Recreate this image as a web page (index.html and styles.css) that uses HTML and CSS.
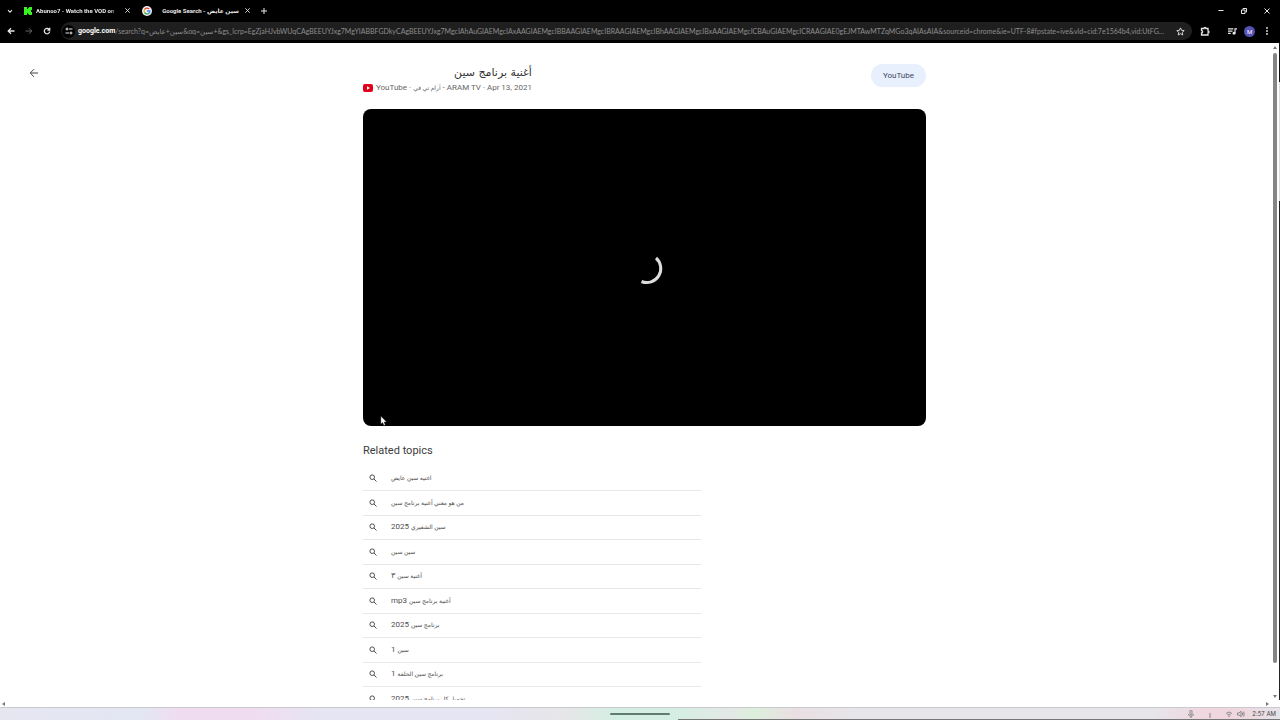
FILE: index.html
```html
<!DOCTYPE html>
<html lang="en">
<head>
<meta charset="utf-8">
<meta name="viewport" content="width=device-width, initial-scale=1">
<title>Google Search - سين عايض</title>
<link rel="stylesheet" href="styles.css">
</head>
<body>
<div class="browser">
  <header class="chrome">
    <div class="tab-strip">
      <button class="icon-btn tab-search" aria-label="Search tabs"><svg viewBox="0 0 10 10" width="8" height="8"><path d="M2.5 4 5 6.5 7.500 4" class="stroke bold"/></svg></button>
      <div class="tab">
        <svg class="favicon" viewBox="0 0 8 8" width="8" height="8"><path fill="#36f51e" d="M0 0h3v2h1V1h1V0h3v3H7v1H6v0h1v1h1v3H5V7H4V6H3v2H0z"/></svg>
        <a class="tab-title fade" href="#">Abunoo7 - Watch the VOD on</a>
        <button class="icon-btn" aria-label="Close tab"><svg viewBox="0 0 8 8" width="7" height="7"><path d="m1.500 1.500 5 5m0-5-5 5" class="stroke"/></svg></button>
      </div>
      <div class="tab tab-active">
        <svg class="favicon" viewBox="0 0 12 12" width="10" height="10"><circle cx="6" cy="6" r="6" fill="#eee"/><g fill="none" stroke-width="1.600"><path stroke="#ea4335" d="M3 4.300A3.500 3.500 0 0 1 8.500 3.500"/><path stroke="#fbbc05" d="M3 4.300a3.500 3.500 0 0 0 0 3.400"/><path stroke="#34a853" d="M3 7.700a3.500 3.500 0 0 0 5.300 1"/><path stroke="#4285f4" d="M8.300 8.700A3.500 3.500 0 0 0 9.500 6H6"/></g></svg>
        <a class="tab-title" href="#">Google Search - سين عايض</a>
        <button class="icon-btn" aria-label="Close tab"><svg viewBox="0 0 8 8" width="7" height="7"><path d="m1.500 1.500 5 5m0-5-5 5" class="stroke"/></svg></button>
      </div>
      <button class="icon-btn new-tab" aria-label="New tab"><svg viewBox="0 0 8 8" width="8" height="8"><path d="M4 1v6M1 4h6" class="stroke"/></svg></button>
      <div class="window-controls">
        <button class="icon-btn" aria-label="Minimize"><svg viewBox="0 0 8 8" width="8" height="8"><path d="M1.500 3.500h5" class="stroke"/></svg></button>
        <button class="icon-btn" aria-label="Restore"><svg viewBox="0 0 8 8" width="8" height="8"><path d="M1.500 3h3.500v3.500H1.500zM3 2.500v-1h3.500V5H5.500" class="stroke"/></svg></button>
        <button class="icon-btn" aria-label="Close"><svg viewBox="0 0 8 8" width="8" height="8"><path d="m1.500 1.500 5 5m0-5-5 5" class="stroke"/></svg></button>
      </div>
    </div>
    <div class="toolbar">
      <div class="nav">
        <button class="icon-btn" aria-label="Back"><svg viewBox="0 0 8 8" width="8" height="8"><path d="M7.500 4h-6M4 1.200 1.200 4 4 6.800" class="stroke bold"/></svg></button>
        <button class="icon-btn dim" aria-label="Forward"><svg viewBox="0 0 8 8" width="8" height="8"><path d="M.5 4h6M4 1.200 6.800 4 4 6.800" class="stroke"/></svg></button>
        <button class="icon-btn" aria-label="Reload"><svg viewBox="0 0 8 8" width="8" height="8"><path d="M6.500 3A2.700 2.700 0 1 0 6.700 4.500M6.700.8v2.400H4.300" class="stroke bold"/></svg></button>
      </div>
      <form class="omnibox">
        <button type="button" class="icon-btn site-info" aria-label="Site information"><svg viewBox="0 0 8 8" width="8" height="8"><path d="M4 2h3.500M.5 6H4" class="stroke"/><circle cx="2" cy="2" r="1" class="stroke"/><circle cx="6" cy="6" r="1" class="stroke"/></svg></button>
        <label class="host" for="url">google.com</label>
        <input id="url" class="url" type="text" spellcheck="false" value="/search?q=سين+عايض&amp;oq=سين+&amp;gs_lcrp=EgZjaHJvbWUqCAgBEEUYJxg7MgYIABBFGDkyCAgBEEUYJxg7MgcIAhAuGIAEMgcIAxAAGIAEMgcIBBAAGIAEMgcIBRAAGIAEMgcIBhAAGIAEMgcIBxAAGIAEMgcICBAuGIAEMgcICRAAGIAE0gEJMTAwMTZqMGo3qAIAsAIA&amp;sourceid=chrome&amp;ie=UTF-8#fpstate=ive&amp;vld=cid:7e1564b4,vid:UtFGW-0Mws...">
        <button type="button" class="icon-btn" aria-label="Bookmark"><svg viewBox="0 0 10 10" width="9" height="9"><path d="m5 1 1.200 2.700 2.900.3L6.900 6l.6 2.900L5 7.400 2.500 8.900 3.100 6 .9 4l2.900-.3z" class="stroke"/></svg></button>
      </form>
      <div class="tools">
        <button class="icon-btn" aria-label="Extensions"><svg viewBox="0 0 10 10" width="10" height="10"><path d="M1.500 2.500H4a1 1 0 0 1 2 0h2V5a1 1 0 0 1 0 2v2H1.500V7a1.200 1.200 0 0 0 0-2.400z" class="stroke bold"/></svg></button>
        <button class="icon-btn media" aria-label="Media controls"><svg viewBox="0 0 10 10" width="9" height="9"><path d="M0 2h6M0 4.500h5M0 7h3M7.800 7V2H10" class="stroke bold"/><circle cx="6.700" cy="7" r="1.600" fill="currentColor"/></svg></button>
        <button class="avatar" aria-label="Profile">M</button>
        <button class="icon-btn" aria-label="Menu"><svg viewBox="0 0 8 8" width="8" height="8" fill="currentColor"><circle cx="4" cy="1" r=".9"/><circle cx="4" cy="4" r=".9"/><circle cx="4" cy="7" r=".9"/></svg></button>
      </div>
    </div>
  </header>

  <div class="viewport">
    <main class="page">
      <a class="back" href="#" aria-label="Back to results"><svg viewBox="0 0 10 10" width="10" height="10"><path d="M9 5H1.500M5 1.200 1.200 5 5 8.800" class="stroke"/></svg></a>
      <article class="result">
        <div class="result-head">
          <div class="heading">
            <h1 class="title" dir="rtl">أغنية برنامج سين</h1>
            <p class="source"><svg viewBox="0 0 10 8" width="10" height="8"><rect width="10" height="8" rx="2" fill="#e3001b"/><path d="m4 2.300 3 1.700-3 1.700z" fill="#fff"/></svg><span>YouTube · <span class="ar">آرام تي في</span> - ARAM TV · Apr 13, 2021</span></p>
          </div>
          <a class="visit" href="#">YouTube</a>
        </div>
        <div class="video">
          <svg class="spinner" viewBox="0 0 40 40" width="40" height="40"><path d="M31 11A14 14 0 0 1 16.500 34.500" fill="none" stroke="#ddd" stroke-width="3"/></svg>
          <svg class="cursor" viewBox="0 0 8 11" width="7" height="10"><path d="M1 0v9l2-1.800L4.500 10.500 6 9.800 4.600 6.600H7.500z" fill="#fff" stroke="#222" stroke-width=".4"/></svg>
        </div>
        <h2 class="related-title">Related topics</h2>
        <ul class="topics">
          <li><a class="topic" href="#"><svg viewBox="0 0 8 8" width="8" height="8"><use href="#lens"/></svg><span dir="rtl"><span class="ar">اغنيه سين عايض</span></span></a></li>
          <li><a class="topic" href="#"><svg viewBox="0 0 8 8" width="8" height="8"><use href="#lens"/></svg><span dir="rtl"><span class="ar">من هو مغني أغنية برنامج سين</span></span></a></li>
          <li><a class="topic" href="#"><svg viewBox="0 0 8 8" width="8" height="8"><use href="#lens"/></svg><span dir="rtl"><span class="ar">سين الشقيري</span> 2025</span></a></li>
          <li><a class="topic" href="#"><svg viewBox="0 0 8 8" width="8" height="8"><use href="#lens"/></svg><span dir="rtl"><span class="ar">سين سين</span></span></a></li>
          <li><a class="topic" href="#"><svg viewBox="0 0 8 8" width="8" height="8"><use href="#lens"/></svg><span dir="rtl"><span class="ar">أغنية سين</span> ٣</span></a></li>
          <li><a class="topic" href="#"><svg viewBox="0 0 8 8" width="8" height="8"><use href="#lens"/></svg><span dir="rtl"><span class="ar">أغنية برنامج سين</span> mp3</span></a></li>
          <li><a class="topic" href="#"><svg viewBox="0 0 8 8" width="8" height="8"><use href="#lens"/></svg><span dir="rtl"><span class="ar">برنامج سين</span> 2025</span></a></li>
          <li><a class="topic" href="#"><svg viewBox="0 0 8 8" width="8" height="8"><use href="#lens"/></svg><span dir="rtl"><span class="ar">سين</span> 1</span></a></li>
          <li><a class="topic" href="#"><svg viewBox="0 0 8 8" width="8" height="8"><use href="#lens"/></svg><span dir="rtl"><span class="ar">برنامج سين الحلقة</span> 1</span></a></li>
          <li><a class="topic" href="#"><svg viewBox="0 0 8 8" width="8" height="8"><use href="#lens"/></svg><span dir="rtl"><span class="ar">تحميل كل برنامج سين</span> 2025</span></a></li>
        </ul>
      </article>
    </main>
    <div class="vscroll"><i class="arrow up"></i><i class="thumb"></i><i class="arrow down"></i></div>
    <div class="edge"></div>
  </div>
  <div class="hscroll"><i class="arrow left"></i><i class="arrow right"></i></div>

  <footer class="taskbar">
    <div class="running"></div>
    <div class="tray">
      <svg class="mic" viewBox="0 0 8 8" width="8" height="8"><rect x="3" y="0" width="2" height="5" rx="1" class="stroke"/><path d="M1.500 4C1.500 7 6.500 7 6.500 4M4 6v2" class="stroke"/></svg>
      <svg class="dl" viewBox="0 0 8 8" width="8" height="8"><path d="M4 3v3M3 7h2" class="stroke"/></svg>
      <svg class="wifi" viewBox="0 0 8 8" width="8" height="8"><path d="M1 3.500Q4 .5 7 3.500M2.300 5Q4 3.300 5.700 5" class="stroke"/><circle cx="4" cy="6.300" r=".8" fill="currentColor"/></svg>
      <svg viewBox="0 0 8 8" width="8" height="8"><path d="M.5 3h1.500L4 1.200v5.600L2 5H.5zM5.200 2.500Q6.200 4 5.200 5.500M6.500 1.500Q8 4 6.500 6.500" class="stroke"/></svg>
      <time>2:57 AM</time>
    </div>
  </footer>
</div>
<svg class="defs" width="0" height="0" aria-hidden="true"><symbol id="lens" viewBox="0 0 8 8"><circle cx="3.200" cy="3.200" r="2.300" class="stroke"/><path d="m5 5 2.500 2.500" class="stroke"/></symbol></svg>
</body>
</html>
```

FILE: styles.css
```css
* { box-sizing: border-box; }
body {
  margin: 0;
  font-family: Roboto, "DejaVu Sans", sans-serif;
  color: #444;
  background: #fff;
}
h1, h2, p, ul { margin: 0; padding: 0; font-weight: 400; }
a { color: inherit; text-decoration: none; }
button, input { border: 0; padding: 0; background: none; color: inherit; font: inherit; }
svg { display: block; flex: none; }
.stroke { fill: none; stroke: currentColor; stroke-width: 1; }
.bold { stroke-width: 1.3; }
.defs { position: absolute; }

.browser { height: 100vh; display: flex; flex-direction: column; overflow: hidden; }

/* Window chrome */
.chrome { background: #000; color: #e8e8e8; flex: none; }
.icon-btn { display: grid; place-items: center; flex: none; width: 12px; height: 12px; }
.tab-strip { display: flex; align-items: center; height: 21px; padding: 0 7px 0 4px; }
.tab { display: flex; align-items: center; gap: 4px; width: 109px; margin-left: 8px; }
.tab-active { width: 111px; margin-left: 9px; gap: 2px; }
.tab-title {
  flex: 1;
  min-width: 0;
  overflow: hidden;
  white-space: nowrap;
  font-size: 6px;
  font-weight: 700;
  line-height: 12px;
}
.tab-active .tab-title { text-align: right; }
.fade { mask-image: linear-gradient(to right, #000 92%, transparent); }
.new-tab { margin-left: 5px; }
.window-controls { display: flex; gap: 11px; margin-left: auto; }

.toolbar { display: flex; align-items: center; height: 22px; padding: 0 7px 2px 5px; }
.nav { display: flex; gap: 6px; }
.dim { color: #666; }
.omnibox {
  flex: 1;
  min-width: 0;
  display: flex;
  align-items: center;
  height: 18px;
  margin-left: 8px;
  padding: 0 6px 0 1px;
  border-radius: 9px;
  background: #1f1f1f;
  font-size: 7px;
  line-height: 18px;
}
.site-info { width: 13px; height: 13px; border-radius: 50%; background: #000; margin-right: 3px; }
.host { color: #fff; font-weight: 700; }
.url {
  flex: 1;
  min-width: 0;
  height: 18px;
  margin-right: 3px;
  color: #8e8e8e;
  font-family: Lato, "DejaVu Sans", sans-serif;
  text-overflow: ellipsis;
}
.tools { display: flex; align-items: center; gap: 6px; margin-left: 7px; }
.media { margin-left: 9px; }
.avatar {
  width: 11px;
  height: 11px;
  border-radius: 50%;
  background: #5652b5;
  color: #fff;
  font-size: 6px;
  line-height: 11px;
  text-align: center;
}

/* Page */
.viewport { flex: 1; min-height: 0; display: flex; }
.page {
  flex: 1;
  min-width: 0;
  overflow: hidden;
  display: grid;
  grid-template-columns: 1fr minmax(0, 563px) 1fr;
  align-items: start;
  padding: 21px 0 0 18px;
}
.back { padding: 4px 11px; justify-self: start; }
.result { grid-column: 2; }
.result-head { display: flex; justify-content: space-between; align-items: flex-start; height: 45px; }
.title { font-family: "DejaVu Sans", sans-serif; font-size: 11px; line-height: 17px; color: #333; }
.source { display: flex; align-items: center; gap: 3px; font-size: 8px; line-height: 14px; color: #666; }
.ar { font-size: 6px; }
.visit {
  padding: 0 12px;
  border-radius: 12px;
  background: #e8f0fe;
  color: #3c4660;
  font-size: 8px;
  line-height: 23px;
}
.video {
  position: relative;
  display: grid;
  place-items: center;
  aspect-ratio: 16 / 9;
  border-radius: 8px;
  background: #000;
}
.cursor { position: absolute; left: 17px; bottom: 0; }
.related-title { margin-top: 16px; font-size: 11px; line-height: 18px; color: #3c3c3c; }
.topics {
  list-style: none;
  display: grid;
  grid-auto-rows: 1fr;
  width: 60%;
  height: 245px;
  margin-top: 7px;
}
.topics li { border-bottom: 1px solid #e8e8e8; }
.topic {
  display: flex;
  align-items: center;
  gap: 14px;
  height: 100%;
  padding-left: 6px;
  font-size: 8px;
  line-height: 12px;
  color: #4d4d4d;
}

/* Scrollbars */
.vscroll { width: 7px; display: flex; flex-direction: column; align-items: center; padding: 3px 0 2px; }
.thumb { flex: 1; width: 4px; margin: 4px 0 32px; border-radius: 2px; background: #858585; }
.arrow { width: 0; height: 0; border: 2px solid transparent; }
.up { border-bottom: 3px solid #777; border-top: 0; }
.down { border-top: 3px solid #777; border-bottom: 0; }
.left { border-right: 3px solid #777; border-left: 0; }
.right { border-left: 3px solid #777; border-right: 0; }
.edge { width: 1px; margin-left: 1px; background: linear-gradient(#111 0 6%, #ddd 6% 24%, #222 24%); }
.hscroll { flex: none; display: flex; justify-content: space-between; align-items: center; height: 7px; padding: 0 11px 0 2px; }

/* Taskbar */
.taskbar {
  position: relative;
  flex: none;
  display: grid;
  grid-template-columns: 1fr 60px 1fr;
  align-items: center;
  height: 13px;
  border-top: 1px solid #c9c9cf;
  background: linear-gradient(to right, #e6e6f1, #e3e7f3 11%, #efdcf0 14% 20%, #e6e5f3 25% 38%, #e7e6e8 44%, #d5eee3 48% 53%, #e3e8e6 57%, #dcefdc 59%, #eadfe2 62%, #e6e6ea 67% 90%, #f0d7df 94% 97%, #e6e3e8);
}
.taskbar::after { content: ""; position: absolute; left: 53%; right: 0; bottom: 0; height: 1px; background: #777; }
.running { grid-column: 2; height: 2px; background: #607d72; border-radius: 1px; }
.tray {
  grid-column: 3;
  justify-self: end;
  display: flex;
  align-items: center;
  gap: 4px;
  padding-right: 4px;
  font: 6px/10px Inter, sans-serif;
  color: #888;
}
.tray time { color: #444; margin-left: 3px; }
.dl { margin: 0 7px; }
```
